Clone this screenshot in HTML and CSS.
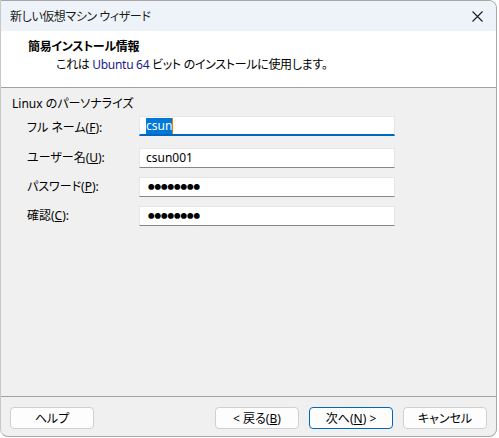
FILE: index.html
```html
<!DOCTYPE html>
<html lang="ja">
<head>
    <meta charset="UTF-8">
    <title>新しい仮想マシン ウィザード</title>
    <link rel="stylesheet" href="styles.css">
</head>
<body>
    <div class="window">
        <div class="titlebar">
            <span class="title">新しい仮想マシン ウィザード</span>
            <svg class="close" width="11" height="11" viewBox="0 0 11 11">
                <path d="M0.5 0.5 L10.5 10.5 M10.5 0.5 L0.5 10.5" stroke="#1a1a1a" stroke-width="1.1" fill="none"/>
            </svg>
        </div>
        <div class="banner">
            <div class="banner-title">簡易インストール情報</div>
            <div class="banner-sub">これは <span class="os">Ubuntu 64</span> ビット のインストールに使用します。</div>
        </div>
        <div class="content">
            <div class="group-label">Linux のパーソナライズ</div>
            <div class="form">
                <label class="lbl">フル ネーム(<u>F</u>):</label>
                <div class="field focused"><span class="sel">csun</span><span class="caret"></span></div>
                <label class="lbl">ユーザー名(<u>U</u>):</label>
                <div class="field">csun001</div>
                <label class="lbl">パスワード(<u>P</u>):</label>
                <div class="field dots">●●●●●●●●</div>
                <label class="lbl">確認(<u>C</u>):</label>
                <div class="field dots">●●●●●●●●</div>
            </div>
        </div>
        <div class="footer">
            <button class="btn">ヘルプ</button>
            <div class="spacer"></div>
            <button class="btn">&lt; 戻る(<u>B</u>)</button>
            <button class="btn primary">次へ(<u>N</u>) &gt;</button>
            <button class="btn">キャンセル</button>
        </div>
    </div>
</body>
</html>
```
FILE: styles.css
```css
* {
    box-sizing: border-box;
}

body {
    margin: 0;
    background: #ffffff;
    font-family: "Noto Sans", "Noto Sans CJK JP", sans-serif;
    font-size: 12px;
    font-feature-settings: "palt";
    color: #000;
}

.window {
    width: 497px;
    height: 437px;
    border: 1px solid #a8a8a8;
    border-left-color: #c8c8c8;
    border-radius: 0 8px 8px 8px;
    background: #f0f0f0;
    overflow: hidden;
    display: flex;
    flex-direction: column;
}

.titlebar {
    height: 30px;
    background: #eef3f9;
    display: flex;
    align-items: center;
    justify-content: space-between;
    padding: 0 13px 0 9px;
}

.title {
    color: #1a1a1a;
    letter-spacing: -0.4px;
}

.banner {
    height: 57px;
    background: #ffffff;
    border-bottom: 1px solid #a0a0a0;
    padding: 7px 0 0 27px;
}

.banner-title {
    font-weight: bold;
    line-height: 18px;
    letter-spacing: -0.3px;
}

.banner-sub {
    padding-left: 28px;
    line-height: 18px;
    letter-spacing: -0.3px;
}

.os {
    color: #1a1a8c;
}

.content {
    flex: 1;
    padding: 7px 0 0 11px;
}

.group-label {
    line-height: 17px;
}

.form {
    display: grid;
    grid-template-columns: 112px 256px;
    row-gap: 9px;
    padding-left: 15px;
    margin-top: 4px;
    align-items: center;
}

.form .field:nth-of-type(1) {
    margin-bottom: 3px;
}

.lbl {
    line-height: 20px;
}

.field {
    height: 20px;
    background: #ffffff;
    border: 1px solid #e6e6e6;
    border-bottom-color: #868686;
    padding: 0 6px;
    line-height: 18px;
    display: flex;
    align-items: center;
}

.field.focused {
    border-bottom: 2px solid #0067c0;
}

.sel {
    background: #0078d7;
    color: #ffffff;
    line-height: 16px;
}

.caret {
    width: 1px;
    height: 16px;
    background: #e08000;
}

.dots {
    font-size: 6.5px;
    padding-left: 8px;
}

.footer {
    height: 40px;
    border-top: 1px solid #a0a0a0;
    display: flex;
    align-items: flex-start;
    gap: 10px;
    padding: 10px 9px 0 9px;
}

.spacer {
    flex: 1;
}

.btn {
    width: 84px;
    height: 22px;
    background: #fdfdfd;
    border: 1px solid #d0d0d0;
    border-radius: 4px;
    font-family: inherit;
    font-size: 12px;
    font-feature-settings: "palt";
    color: #000;
    padding: 0;
}

.btn.primary {
    border-color: #0067c0;
}
```
